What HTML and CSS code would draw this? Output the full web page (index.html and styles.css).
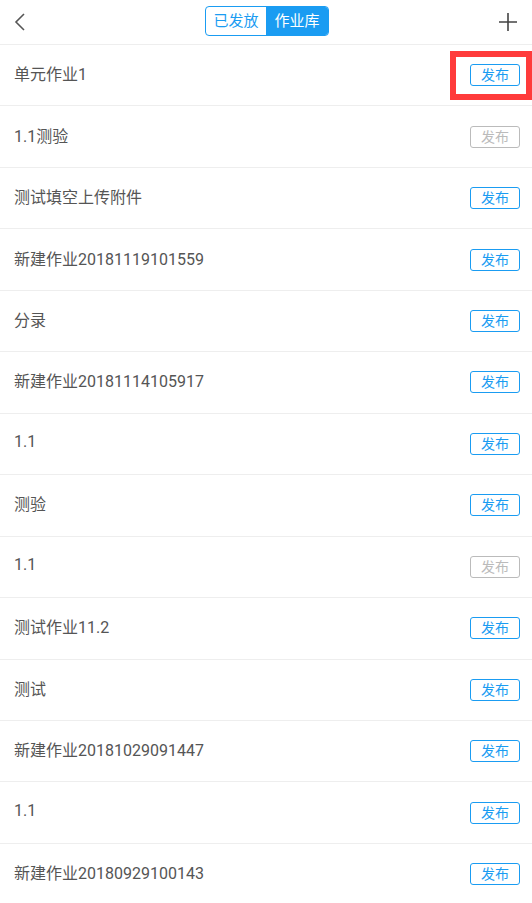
FILE: index.html
```html
<!DOCTYPE html>
<html lang="zh-CN">
<head>
    <meta charset="UTF-8">
    <meta name="viewport" content="width=device-width, initial-scale=1.0">
    <title>作业库</title>
    <link rel="stylesheet" href="styles.css">
</head>
<body>

<div class="header">
    <span class="back">
        <svg width="14" height="18" viewBox="0 0 14 18"><path d="M11 1 L3 9 L11 17" fill="none" stroke="#555" stroke-width="1.6"/></svg>
    </span>
    <div class="tabs">
        <span class="tab">已发放</span>
        <span class="tab active">作业库</span>
    </div>
    <span class="add">
        <svg width="18" height="18" viewBox="0 0 18 18"><path d="M9 0 V18 M0 9 H18" fill="none" stroke="#444" stroke-width="1.6"/></svg>
    </span>
</div>

<ul class="list">
    <li class="row"><span class="name">单元作业1</span><span class="btn highlight">发布</span></li>
    <li class="row"><span class="name">1.1测验</span><span class="btn off">发布</span></li>
    <li class="row"><span class="name">测试填空上传附件</span><span class="btn">发布</span></li>
    <li class="row"><span class="name">新建作业20181119101559</span><span class="btn">发布</span></li>
    <li class="row"><span class="name">分录</span><span class="btn">发布</span></li>
    <li class="row"><span class="name">新建作业20181114105917</span><span class="btn">发布</span></li>
    <li class="row"><span class="name">1.1</span><span class="btn">发布</span></li>
    <li class="row"><span class="name">测验</span><span class="btn">发布</span></li>
    <li class="row"><span class="name">1.1</span><span class="btn off">发布</span></li>
    <li class="row"><span class="name">测试作业11.2</span><span class="btn">发布</span></li>
    <li class="row"><span class="name">测试</span><span class="btn">发布</span></li>
    <li class="row"><span class="name">新建作业20181029091447</span><span class="btn">发布</span></li>
    <li class="row"><span class="name">1.1</span><span class="btn">发布</span></li>
    <li class="row"><span class="name">新建作业20180929100143</span><span class="btn">发布</span></li>
</ul>

</body>
</html>
```

FILE: styles.css
```css
body {
    margin: 0;
    background: #fff;
    font-family: Roboto, "Noto Sans CJK SC", sans-serif;
    color: #555;
    overflow: hidden;
}
.header {
    height: 45px;
    border-bottom: 1px solid #eee;
    box-sizing: border-box;
    display: flex;
    align-items: center;
    justify-content: space-between;
    padding: 0 15px 0 13px;
    position: relative;
}
.back, .add {
    display: flex;
    align-items: center;
}
.tabs {
    position: absolute;
    left: 205px;
    top: 6px;
    display: flex;
    height: 30px;
    border: 1px solid #1a9cf2;
    border-radius: 4px;
    box-sizing: border-box;
    overflow: hidden;
}
.tab {
    width: 60px;
    line-height: 28px;
    text-align: center;
    font-size: 15px;
    color: #1a9cf2;
}
.tab.active {
    width: 62px;
    background: #1a9cf2;
    color: #fff;
}
.list {
    list-style: none;
    margin: 0;
    padding: 0;
}
.row {
    height: 61.46px;
    box-sizing: border-box;
    border-bottom: 1px solid #eee;
    display: flex;
    align-items: center;
    justify-content: space-between;
    padding: 0 12px 0 14px;
    position: relative;
}
.name {
    font-size: 16px;
    color: #555;
    margin-top: -4px;
}
.btn {
    width: 50px;
    height: 22px;
    box-sizing: border-box;
    border: 1px solid #1a9cf2;
    border-radius: 3px;
    color: #1a9cf2;
    font-size: 14px;
    line-height: 20px;
    text-align: center;
    position: relative;
}
.btn.off {
    border-color: #bbb;
    color: #bbb;
}
.btn.highlight::after {
    content: "";
    position: absolute;
    left: -21px;
    top: -14px;
    width: 82px;
    height: 49px;
    box-sizing: border-box;
    border: 6px solid #ff3b3b;
}
```
